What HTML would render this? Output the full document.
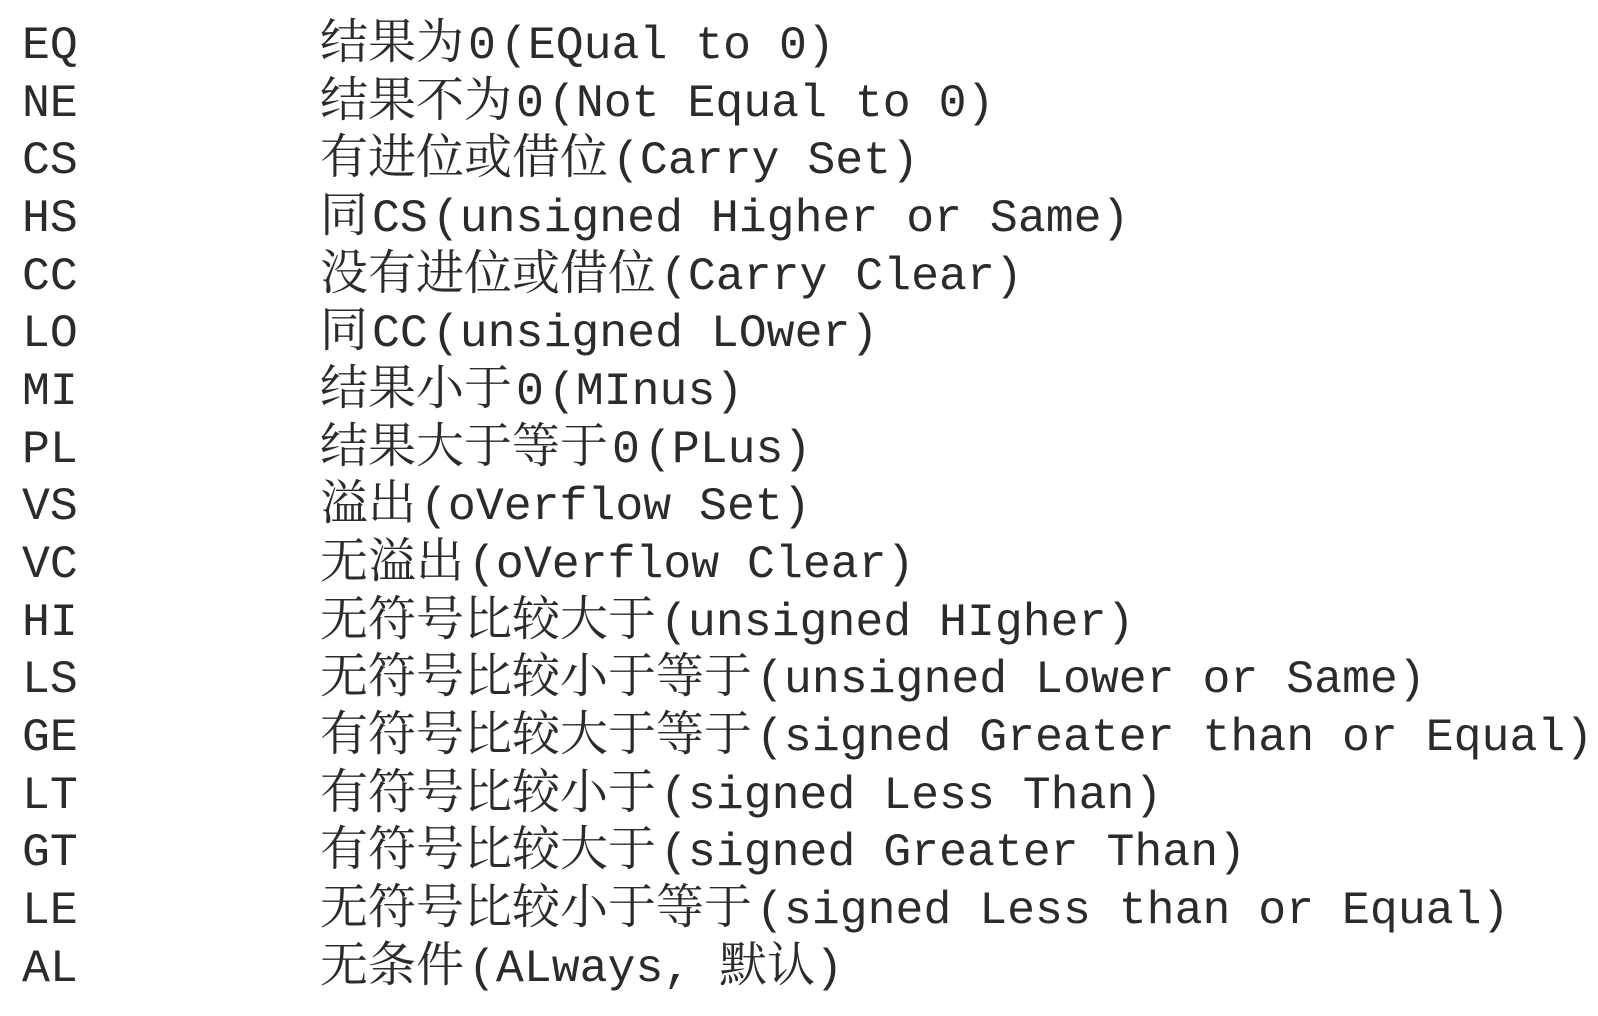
<!DOCTYPE html>
<html><head><meta charset="utf-8"><style>
html,body{margin:0;padding:0;background:#fff;}
body{width:1598px;height:1016px;position:relative;overflow:hidden;font-family:"Liberation Mono","Noto Serif CJK SC",monospace;color:#2b2b2b;font-size:46.5px;}
.r{position:absolute;left:0;height:58px;line-height:58px;white-space:pre;}
.c{position:absolute;left:22px;}
.d{position:absolute;left:320px;}
.k{font-family:"Noto Serif CJK SC",serif;font-size:48px;line-height:0;}
.g{display:inline-block;width:4px}
</style></head><body>
<div class="r" style="top:17px"><span class="c">EQ</span><span class="d"><span class="k">结果为</span><span class="g"></span>0<span class="g"></span>(EQual to 0)</span></div>
<div class="r" style="top:75px"><span class="c">NE</span><span class="d"><span class="k">结果不为</span><span class="g"></span>0<span class="g"></span>(Not Equal to 0)</span></div>
<div class="r" style="top:132px"><span class="c">CS</span><span class="d"><span class="k">有进位或借位</span><span class="g"></span>(Carry Set)</span></div>
<div class="r" style="top:190px"><span class="c">HS</span><span class="d"><span class="k">同</span><span class="g"></span>CS<span class="g"></span>(unsigned Higher or Same)</span></div>
<div class="r" style="top:248px"><span class="c">CC</span><span class="d"><span class="k">没有进位或借位</span><span class="g"></span>(Carry Clear)</span></div>
<div class="r" style="top:305px"><span class="c">LO</span><span class="d"><span class="k">同</span><span class="g"></span>CC<span class="g"></span>(unsigned LOwer)</span></div>
<div class="r" style="top:363px"><span class="c">MI</span><span class="d"><span class="k">结果小于</span><span class="g"></span>0<span class="g"></span>(MInus)</span></div>
<div class="r" style="top:421px"><span class="c">PL</span><span class="d"><span class="k">结果大于等于</span><span class="g"></span>0<span class="g"></span>(PLus)</span></div>
<div class="r" style="top:478px"><span class="c">VS</span><span class="d"><span class="k">溢出</span><span class="g"></span>(oVerflow Set)</span></div>
<div class="r" style="top:536px"><span class="c">VC</span><span class="d"><span class="k">无溢出</span><span class="g"></span>(oVerflow Clear)</span></div>
<div class="r" style="top:594px"><span class="c">HI</span><span class="d"><span class="k">无符号比较大于</span><span class="g"></span>(unsigned HIgher)</span></div>
<div class="r" style="top:651px"><span class="c">LS</span><span class="d"><span class="k">无符号比较小于等于</span><span class="g"></span>(unsigned Lower or Same)</span></div>
<div class="r" style="top:709px"><span class="c">GE</span><span class="d"><span class="k">有符号比较大于等于</span><span class="g"></span>(signed Greater than or Equal)</span></div>
<div class="r" style="top:767px"><span class="c">LT</span><span class="d"><span class="k">有符号比较小于</span><span class="g"></span>(signed Less Than)</span></div>
<div class="r" style="top:824px"><span class="c">GT</span><span class="d"><span class="k">有符号比较大于</span><span class="g"></span>(signed Greater Than)</span></div>
<div class="r" style="top:882px"><span class="c">LE</span><span class="d"><span class="k">无符号比较小于等于</span><span class="g"></span>(signed Less than or Equal)</span></div>
<div class="r" style="top:940px"><span class="c">AL</span><span class="d"><span class="k">无条件</span><span class="g"></span>(ALways, <span class="k">默认</span>)</span></div>
</body></html>
